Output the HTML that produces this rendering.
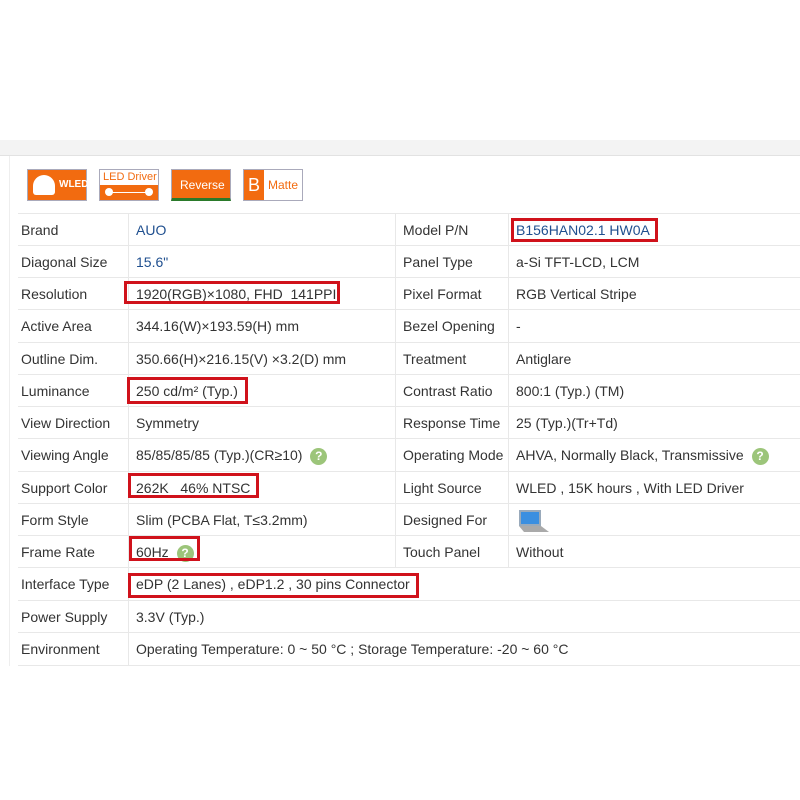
<!DOCTYPE html>
<html><head><meta charset="utf-8"><style>
body{margin:0;width:800px;height:800px;background:#fff;position:relative;overflow:hidden;font-family:"Liberation Sans",Arial,sans-serif;font-size:14px;color:#333}
.band{position:absolute;left:0;top:140px;width:800px;height:15px;background:#f3f3f3;border-bottom:1px solid #e2e2e2}
.vl{position:absolute;left:9px;top:156px;width:1px;height:510px;background:#eee}
.row{position:absolute;left:18px;width:782px;height:32px;border-top:1px solid #e8e8e8}
.c{position:absolute;top:0;height:32px;line-height:32px;white-space:nowrap}
.l1{left:3px}.v1{left:110px;padding-left:7px;border-left:1px solid #e8e8e8;height:32px}
.l2{left:377px;padding-left:7px;border-left:1px solid #e8e8e8}.v2{left:490px;padding-left:7px;border-left:1px solid #e8e8e8}
.blue{color:#1f4f8f}
.box{position:absolute;border:3px solid #d0121b;box-sizing:border-box}
.q{display:inline-block;width:17px;height:17px;border-radius:50%;background:#9cc57a;color:#fff;font-size:12px;font-weight:bold;line-height:17px;text-align:center;vertical-align:middle;margin-left:4px}
.b{position:absolute;top:169px;width:60px;height:32px;box-sizing:border-box;border:1px solid #aab;font-size:12px;color:#fff}
</style></head><body>
<div class="band"></div><div class="vl"></div>
<div class="b" style="left:27px;background:#f26b10"><div style="position:absolute;left:5px;top:5px;width:22px;height:20px;background:#fff;border-radius:11px 11px 3px 3px"></div><span style="position:absolute;left:31px;top:9px;font-weight:bold;font-size:10px">WLED</span></div>
<div class="b" style="left:99px;background:#fff"><span style="position:absolute;left:3px;top:1px;color:#f26b10;font-size:11px">LED Driver</span><div style="position:absolute;left:0;top:15px;width:58px;height:15px;background:#f26b10"><div style="position:absolute;left:5px;top:3px;width:8px;height:8px;border-radius:50%;background:#fff"></div><div style="position:absolute;left:12px;top:7px;width:34px;height:1px;background:#fff"></div><div style="position:absolute;left:45px;top:3px;width:8px;height:8px;border-radius:50%;background:#fff"></div></div></div>
<div class="b" style="left:171px;background:#f26b10;border-bottom:3px solid #2a7a2a"><span style="position:absolute;left:8px;top:8px">Reverse</span></div>
<div class="b" style="left:243px;background:#fff"><div style="position:absolute;left:0;top:0;width:20px;height:30px;background:#f26b10;color:#fff;font-size:18px;line-height:30px;text-align:center">B</div><span style="position:absolute;left:24px;top:8px;color:#f26b10">Matte</span></div>

<div class="row" style="top:213px"><div class="c l1">Brand</div><div class="c v1 blue">AUO</div><div class="c l2">Model P/N</div><div class="c v2 blue">B156HAN02.1 HW0A</div></div>
<div class="row" style="top:245px"><div class="c l1">Diagonal Size</div><div class="c v1 blue">15.6"</div><div class="c l2">Panel Type</div><div class="c v2">a-Si TFT-LCD, LCM</div></div>
<div class="row" style="top:277px"><div class="c l1">Resolution</div><div class="c v1">1920(RGB)×1080, FHD&nbsp; 141PPI</div><div class="c l2">Pixel Format</div><div class="c v2">RGB Vertical Stripe</div></div>
<div class="row" style="top:309px"><div class="c l1">Active Area</div><div class="c v1">344.16(W)×193.59(H) mm</div><div class="c l2">Bezel Opening</div><div class="c v2">-</div></div>
<div class="row" style="top:342px"><div class="c l1">Outline Dim.</div><div class="c v1">350.66(H)×216.15(V) ×3.2(D) mm</div><div class="c l2">Treatment</div><div class="c v2">Antiglare</div></div>
<div class="row" style="top:374px"><div class="c l1">Luminance</div><div class="c v1">250 cd/m² (Typ.)</div><div class="c l2">Contrast Ratio</div><div class="c v2">800:1 (Typ.) (TM)</div></div>
<div class="row" style="top:406px"><div class="c l1">View Direction</div><div class="c v1">Symmetry</div><div class="c l2">Response Time</div><div class="c v2">25 (Typ.)(Tr+Td)</div></div>
<div class="row" style="top:438px"><div class="c l1">Viewing Angle</div><div class="c v1">85/85/85/85 (Typ.)(CR≥10) <span class="q">?</span></div><div class="c l2">Operating Mode</div><div class="c v2">AHVA, Normally Black, Transmissive <span class="q">?</span></div></div>
<div class="row" style="top:471px"><div class="c l1">Support Color</div><div class="c v1">262K&nbsp;&nbsp; 46% NTSC</div><div class="c l2">Light Source</div><div class="c v2">WLED , 15K hours , With LED Driver</div></div>
<div class="row" style="top:503px"><div class="c l1">Form Style</div><div class="c v1">Slim (PCBA Flat, T≤3.2mm)</div><div class="c l2">Designed For</div><div class="c v2"><svg width="34" height="28" style="vertical-align:middle"><rect x="3" y="3" width="22" height="16" fill="#9ab" /><rect x="5" y="5" width="18" height="12" fill="#3b8fe0"/><polygon points="3,19 25,19 33,25 8,25" fill="#aaa"/></svg></div></div>
<div class="row" style="top:535px"><div class="c l1">Frame Rate</div><div class="c v1">60Hz <span class="q">?</span></div><div class="c l2">Touch Panel</div><div class="c v2">Without</div></div>
<div class="row" style="top:567px"><div class="c l1">Interface Type</div><div class="c v1" style="border-left:1px solid #e8e8e8">eDP (2 Lanes) , eDP1.2 , 30 pins Connector</div></div>
<div class="row" style="top:600px"><div class="c l1">Power Supply</div><div class="c v1">3.3V (Typ.)</div></div>
<div class="row" style="top:632px;border-bottom:1px solid #e8e8e8"><div class="c l1">Environment</div><div class="c v1">Operating Temperature: 0 ~ 50 °C ; Storage Temperature: -20 ~ 60 °C</div></div>

<div class="box" style="left:511px;top:218px;width:147px;height:24px"></div>
<div class="box" style="left:124px;top:281px;width:216px;height:23px"></div>
<div class="box" style="left:127px;top:377px;width:121px;height:27px"></div>
<div class="box" style="left:128px;top:473px;width:131px;height:25px"></div>
<div class="box" style="left:129px;top:536px;width:71px;height:25px"></div>
<div class="box" style="left:128px;top:573px;width:291px;height:25px"></div>
</body></html>
